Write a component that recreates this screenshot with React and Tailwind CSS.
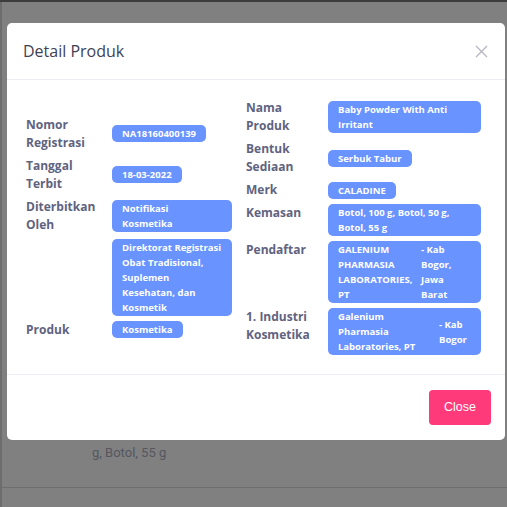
import React from 'react';

const Badge = ({ children, full, wide }) => (
  <div
    className={`rounded-[5px] bg-[#6993ff] px-[10px] py-px text-[9.5px] font-bold leading-[15px] text-white whitespace-nowrap ${
      full ? (wide ? 'w-[153px]' : 'w-[120px]') : 'w-fit'
    }`}
  >
    {children}
  </div>
);

const Row = ({ label, labelWidth, children }) => (
  <div className="flex">
    <div
      className={`${labelWidth} shrink-0 self-start text-[12px] font-bold leading-[18px] text-[#5f6380]`}
    >
      {label}
    </div>
    <div className="self-center">{children}</div>
  </div>
);

const App = () => {
  const kiri = 'w-[86px]';
  const kanan = 'w-[82px]';

  return (
    <div className="relative h-[507px] w-[507px] overflow-hidden border-t-2 border-[#3d3d3d] bg-[#808080] font-['Open_Sans',sans-serif]">
      {/* sisa halaman di belakang overlay */}
      <div className="absolute left-0 top-0 h-full w-[2px] bg-[#6d6d6d]" />

      <div className="pl-[7px] pt-[21px]">
        {/* Modal */}
        <div className="w-[498px] rounded-[5px] bg-white">
          {/* Header */}
          <div className="flex items-center justify-between border-b border-[#ebedf3] py-4 pl-4 pr-[17px]">
            <h3 className="text-[16px] font-medium leading-6 text-[#3f4254]">Detail Produk</h3>
            <svg width="13" height="13" viewBox="0 0 13 13" className="text-[#b5b5c3]">
              <path d="M1 1L12 12M12 1L1 12" stroke="currentColor" strokeWidth="1.3" />
            </svg>
          </div>

          {/* Body */}
          <div className="flex items-center py-[19px] pl-[19px]">
            <div className="flex w-[220px] flex-col gap-[5px]">
              <Row label={<>Nomor<br />Registrasi</>} labelWidth={kiri}>
                <Badge>NA18160400139</Badge>
              </Row>
              <Row label={<>Tanggal<br />Terbit</>} labelWidth={kiri}>
                <Badge>18-03-2022</Badge>
              </Row>
              <Row label={<>Diterbitkan<br />Oleh</>} labelWidth={kiri}>
                <Badge full>Notifikasi<br />Kosmetika</Badge>
              </Row>
              <Row label="" labelWidth={kiri}>
                <Badge full>
                  Direktorat Registrasi<br />Obat Tradisional,<br />Suplemen<br />Kesehatan, dan<br />Kosmetik
                </Badge>
              </Row>
              <Row label="Produk" labelWidth={kiri}>
                <Badge>Kosmetika</Badge>
              </Row>
            </div>

            <div className="flex flex-col gap-[5px]">
              <Row label={<>Nama<br />Produk</>} labelWidth={kanan}>
                <Badge full wide>Baby Powder With Anti<br />Irritant</Badge>
              </Row>
              <Row label={<>Bentuk<br />Sediaan</>} labelWidth={kanan}>
                <Badge>Serbuk Tabur</Badge>
              </Row>
              <Row label="Merk" labelWidth={kanan}>
                <Badge>CALADINE</Badge>
              </Row>
              <Row label="Kemasan" labelWidth={kanan}>
                <Badge full wide>Botol, 100 g, Botol, 50 g,<br />Botol, 55 g</Badge>
              </Row>
              <Row label="Pendaftar" labelWidth={kanan}>
                <Badge full wide>
                  <div className="flex">
                    <span className="w-[83px]">GALENIUM<br />PHARMASIA<br />LABORATORIES,<br />PT</span>
                    <span>- Kab<br />Bogor,<br />Jawa<br />Barat</span>
                  </div>
                </Badge>
              </Row>
              <Row label={<>1. Industri<br />Kosmetika</>} labelWidth={kanan}>
                <Badge full wide>
                  <div className="flex items-center">
                    <span className="w-[101px]">Galenium<br />Pharmasia<br />Laboratories, PT</span>
                    <span>- Kab<br />Bogor</span>
                  </div>
                </Badge>
              </Row>
            </div>
          </div>

          {/* Footer */}
          <div className="flex justify-end border-t border-[#ebedf3] py-[15px] pr-[14px]">
            <button className="h-[35px] rounded-[4px] bg-[#ff3a7a] px-[15px] font-['Liberation_Sans',sans-serif] text-[12.5px] text-white">
              Close
            </button>
          </div>
        </div>

        {/* teks halaman di bawah modal */}
        <div className="pl-[85px] pt-[5px] font-['Roboto',sans-serif] text-[13px] leading-[16px] text-[#55575f]">
          g, Botol, 55 g
        </div>
        <div className="-ml-[5px] mt-[26px] border-t border-[#6e6e6e]" />
      </div>
    </div>
  );
};

export default App;
